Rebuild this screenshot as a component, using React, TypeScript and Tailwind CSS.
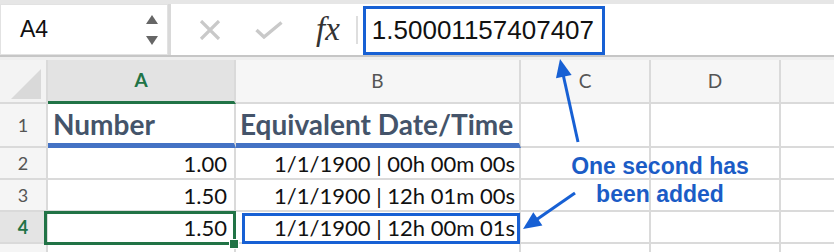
const rows = [
  { n: '2', a: '1.00', b: '1/1/1900 | 00h 00m 00s' },
  { n: '3', a: '1.50', b: '1/1/1900 | 12h 01m 00s' },
  { n: '4', a: '1.50', b: '1/1/1900 | 12h 00m 01s', active: true },
];

const line = 'border-r-2 border-b-2 border-[#dadada]';

const App = () => {
  return (
    <div className="relative w-[834px] h-[252px] overflow-hidden bg-white font-['Lato',sans-serif]">
      {/* Toolbar */}
      <div className="h-[4px] bg-[#e6e6e6]" />
      <div className="flex h-[51px] items-stretch">
        <div className="flex w-[168px] items-center justify-between border border-[#e2e2e2] bg-white pl-[19px] pr-[8px]">
          <span className="font-['Liberation_Sans',sans-serif] text-[23px] text-[#111]">A4</span>
          <svg width="14" height="32" viewBox="0 0 14 32">
            <polygon points="7,1 13,10 1,10" fill="#666" />
            <polygon points="1,22 13,22 7,31" fill="#666" />
          </svg>
        </div>
        <div className="w-[3px] bg-[#d9d9d9]" />
        <div className="flex flex-1 items-center">
          <svg className="ml-[28px]" width="22" height="20" viewBox="0 0 22 20">
            <path d="M2 1 L20 19 M20 1 L2 19" stroke="#c9c9c9" strokeWidth="3.2" />
          </svg>
          <svg className="ml-[34px]" width="28" height="18" viewBox="0 0 28 18">
            <path d="M1.5 9 L9 16 L26.5 1.5" stroke="#c9c9c9" strokeWidth="3.4" fill="none" />
          </svg>
          <span className="ml-[33px] font-['Liberation_Serif',serif] text-[33px] italic leading-none text-[#333]">
            fx
          </span>
          <div className="ml-[16px] h-[28px] w-[2px] bg-[#dedede]" />
          <div className="ml-[5px] mt-[2px] flex h-[49px] w-[242px] items-center border-[3px] border-[#1760d4] pl-[6px]">
            <span className="font-['Liberation_Sans',sans-serif] text-[26px] text-[#111]">1.50001157407407</span>
          </div>
        </div>
      </div>
      <div className="h-[2px] bg-[#c6c6c6]" />
      <div className="h-[3px] bg-[#eeeeee]" />

      {/* Sheet */}
      <div className="grid grid-cols-[48px_188px_285px_130px_130px_53px] grid-rows-[44px_44px_32px_32px_32px_20px]">
        {/* column headers */}
        <div className={`${line} flex items-end justify-end bg-[#f3f3f3] pb-[3px] pr-[5px]`}>
          <svg width="30" height="30" viewBox="0 0 30 30">
            <polygon points="30,0 30,30 0,30" fill="#d9d9d9" />
          </svg>
        </div>
        <div className="flex items-center justify-center border-r-2 border-b-[3px] border-r-[#dadada] border-b-[#217346] bg-[#e3e3e3] text-[19px] font-bold text-[#217346]">
          A
        </div>
        <div className={`${line} flex items-center justify-center bg-[#f6f6f6] text-[19px] text-[#555]`}>B</div>
        <div className={`${line} flex items-center justify-center bg-[#f6f6f6] text-[19px] text-[#555]`}>C</div>
        <div className={`${line} flex items-center justify-center bg-[#f6f6f6] text-[19px] text-[#555]`}>D</div>
        <div className="border-b-2 border-[#dadada] bg-[#f6f6f6]" />

        {/* row 1 */}
        <div className={`${line} flex items-center justify-center bg-[#f5f5f5] text-[18px] text-[#555]`}>1</div>
        <div className="flex items-center border-r-2 border-b-[5px] border-r-[#dadada] border-b-[#4472c4] pl-[5px] text-[28px] font-bold text-[#44546a]">
          Number
        </div>
        <div className="flex items-center border-r-2 border-b-[5px] border-r-[#dadada] border-b-[#4472c4] pl-[4px] text-[28px] font-bold text-[#44546a]">
          Equivalent Date/Time
        </div>
        <div className={line} />
        <div className={line} />
        <div className="border-b-2 border-[#dadada]" />

        {rows.map((r) => (
          <div key={r.n} className="contents">
            <div
              className={`${line} flex items-center justify-center text-[18px] ${
                r.active ? 'bg-[#e4e4e4] font-bold text-[#217346]' : 'bg-[#f5f5f5] text-[#555]'
              }`}
            >
              {r.n}
            </div>
            <div className={`${line} relative flex items-center justify-end pr-[7px] text-[22px] text-[#111]`}>
              {r.a}
              {r.active && (
                <>
                  <div className="absolute left-[-4px] right-[-2px] top-[-1px] bottom-[-3px] z-10 border-[3px] border-[#217346]" />
                  <div className="absolute right-[-5px] bottom-[-7px] z-20 h-[10px] w-[10px] border border-white bg-[#217346]" />
                </>
              )}
            </div>
            <div className={`${line} relative flex items-center justify-end pr-[4px] text-[22px] text-[#111]`}>
              {r.b}
              {r.active && (
                <div className="absolute left-[6px] right-[-1px] top-[1px] bottom-[-2px] z-10 border-[3px] border-[#1760d4]" />
              )}
            </div>
            <div className={line} />
            <div className={line} />
            <div className="border-b-2 border-[#dadada]" />
          </div>
        ))}

        {/* row 5 (cut off) */}
        <div className="border-r-2 border-[#dadada] bg-[#f5f5f5]" />
        <div className="border-r-2 border-[#dadada]" />
        <div className="border-r-2 border-[#dadada]" />
        <div className="border-r-2 border-[#dadada]" />
        <div className="border-r-2 border-[#dadada]" />
        <div />
      </div>

      {/* Annotation */}
      <div className="absolute left-[560px] top-[152px] z-30 w-[200px] text-center font-['Liberation_Sans',sans-serif] text-[23px] font-bold leading-[28px] text-[#1b5cc6]">
        One second has
        <br />
        been added
      </div>
      <svg className="pointer-events-none absolute inset-0 z-30" width="834" height="252" viewBox="0 0 834 252">
        <line x1="578" y1="142" x2="563" y2="74" stroke="#1760d4" strokeWidth="3" />
        <polygon points="560,59 571.6,74.9 556,78.3" fill="#1760d4" />
        <line x1="575" y1="193" x2="536" y2="220" stroke="#1760d4" strokeWidth="3" />
        <polygon points="523,229 542.4,225.4 533.3,212.2" fill="#1760d4" />
      </svg>
    </div>
  );
};

export default App;
